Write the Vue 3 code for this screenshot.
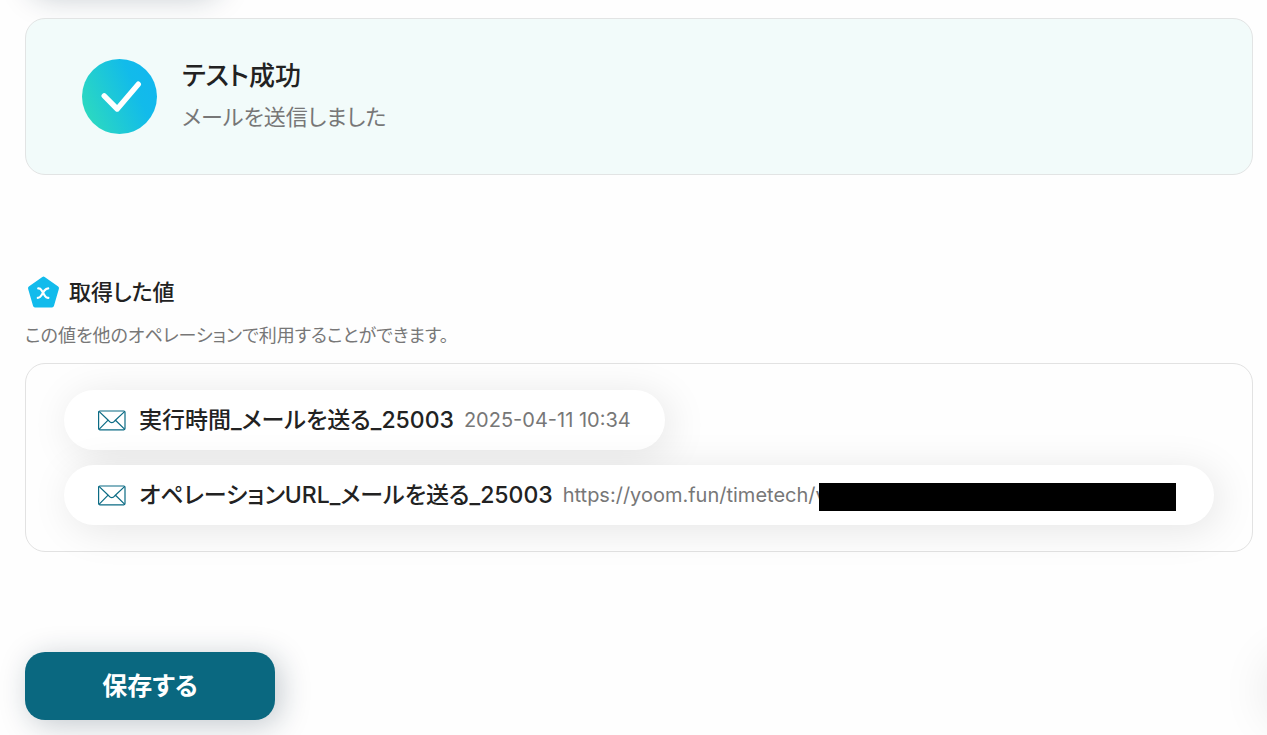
<script setup>
const values = [
  { name: '実行時間_メールを送る_25003', value: '2025-04-11 10:34', redacted: false },
  { name: 'オペレーションURL_メールを送る_25003', value: 'https://yoom.fun/timetech/v', redacted: true },
]
</script>

<template>
  <div class="viewport">
    <div class="previous-action" aria-hidden="true"></div>
    <div class="help-launcher" aria-hidden="true"></div>
    <main class="page">
      <section class="result">
        <svg class="result-icon" viewBox="0 0 75 75" aria-hidden="true">
          <defs>
            <linearGradient id="success" x1="0.02" y1="0.7" x2="0.95" y2="0.3">
              <stop offset="0" stop-color="#2cd9c0" />
              <stop offset="0.75" stop-color="#12bbea" />
              <stop offset="1" stop-color="#12b8ee" />
            </linearGradient>
          </defs>
          <circle cx="37.500" cy="37.500" r="37.500" fill="url(#success)" />
          <path d="M22.200 36.800 35.200 50 56.300 25.200" fill="none" stroke="#fff" stroke-width="5.400" stroke-linecap="round" stroke-linejoin="round" />
        </svg>
        <div>
          <h1>テスト成功</h1>
          <p class="message">メールを送信しました</p>
        </div>
      </section>

      <section class="outputs">
        <h2>
          <svg class="badge" viewBox="0 0 36 36" aria-hidden="true">
            <path d="M18.500 4.500 32 14.200 27 31.500H10L5 14.200Z" fill="#12bbec" stroke="#12bbec" stroke-width="4" stroke-linejoin="round" />
            <path d="M13.200 14.400C14.800 14.200 15.600 14.800 16.500 16.300L20 22C20.900 23.500 21.700 24.100 23.400 23.900M23.200 14.400C21.400 14.400 20.500 15.200 19.500 16.500L16.300 21.500C15.300 23 14.400 23.900 12.800 23.900" fill="none" stroke="#fff" stroke-width="2.200" stroke-linecap="round" />
          </svg>
          取得した値
        </h2>
        <p class="hint">この値を他のオペレーションで利用することができます。</p>
        <ul class="values">
          <li v-for="item in values" :key="item.name" :class="{ wide: item.redacted }">
            <svg class="mail" viewBox="0 0 28 21" aria-hidden="true">
              <g fill="none" stroke="#0b6b84" stroke-width="1.200" stroke-linejoin="round">
                <rect x="0.600" y="1" width="26.400" height="18.800" rx="1.200" />
                <path d="M1 1.400 10.800 10.800Q13.800 14.600 16.800 10.800L26.800 1.400M1 19.400 10.100 10.200M26.800 19.400 17.500 10.200" />
              </g>
            </svg>
            <strong>{{ item.name }}</strong>
            <span class="value">{{ item.value }}</span>
            <span v-if="item.redacted" class="redaction"></span>
          </li>
        </ul>
      </section>

      <button type="button" class="save">保存する</button>
    </main>
  </div>
</template>

<style>
body {
  margin: 0;
  background: #fff;
}
</style>

<style scoped>
.viewport {
  position: relative;
  overflow: hidden;
  min-height: 100vh;
  box-sizing: border-box;
  background: #fefefe;
  color: #222;
  font-family: Inter, "Noto Sans CJK JP", sans-serif;
  font-feature-settings: "palt";
}
.previous-action {
  position: absolute;
  left: 25px;
  top: -68px;
  width: 190px;
  height: 60px;
  border-radius: 20px;
  box-shadow: 5px 5px 30px rgba(20, 45, 65, 0.25);
}
.help-launcher {
  position: absolute;
  right: -70px;
  bottom: 10px;
  width: 70px;
  height: 70px;
  border-radius: 50%;
  box-shadow: 0 0 50px rgba(0, 0, 0, 0.1);
}
.page {
  position: relative;
  padding: 18px 14px 15px 25px;
}
.result {
  display: flex;
  align-items: center;
  gap: 25px;
  padding: 40px 56px;
  border: 1px solid #e2e4e4;
  border-radius: 20px;
  background: #f2fbfa;
}
.result-icon {
  width: 75px;
  height: 75px;
}
h1, h2, p, ul {
  margin: 0;
}
h1 {
  font-size: 26px;
  line-height: 34px;
  font-weight: 500;
}
.message {
  margin-top: 8px;
  font-size: 22px;
  line-height: 33px;
  color: #777;
}
.outputs {
  margin-top: 99px;
}
h2 {
  display: flex;
  align-items: center;
  gap: 8px;
  font-size: 22px;
  line-height: 36px;
  font-weight: 500;
}
.badge {
  width: 36px;
  height: 36px;
}
.hint {
  margin-top: 13px;
  font-size: 18px;
  line-height: 26px;
  color: #777;
}
.values {
  display: flex;
  flex-direction: column;
  align-items: flex-start;
  gap: 15px;
  margin-top: 14px;
  padding: 26px 38px;
  border: 1px solid #e2e2e2;
  border-radius: 20px;
  list-style: none;
}
li {
  display: flex;
  align-items: center;
  box-sizing: border-box;
  height: 60px;
  padding: 0 34px;
  border-radius: 30px;
  background: #fff;
  box-shadow: 5px 5px 40px rgba(0, 0, 0, 0.1);
}
li.wide {
  width: 100%;
  padding-right: 38px;
}
.mail {
  flex: none;
  width: 28px;
  height: 21px;
  margin-right: 13px;
}
strong {
  font-size: 23px;
  line-height: 32px;
  font-weight: 500;
  white-space: nowrap;
}
.value {
  margin-left: 10px;
  font-size: 20px;
  line-height: 30px;
  color: #777;
  white-space: nowrap;
}
.redaction {
  flex: 1;
  height: 28px;
  margin: 4px 0 0 -8px;
  background: #000;
}
.save {
  display: block;
  width: 250px;
  height: 68px;
  margin-top: 100px;
  border: 0;
  border-radius: 20px;
  background: #0a6880;
  color: #fff;
  font: inherit;
  font-size: 25px;
  line-height: 36px;
  font-weight: 700;
  box-shadow: 5px 5px 30px rgba(20, 45, 65, 0.25);
}
</style>
